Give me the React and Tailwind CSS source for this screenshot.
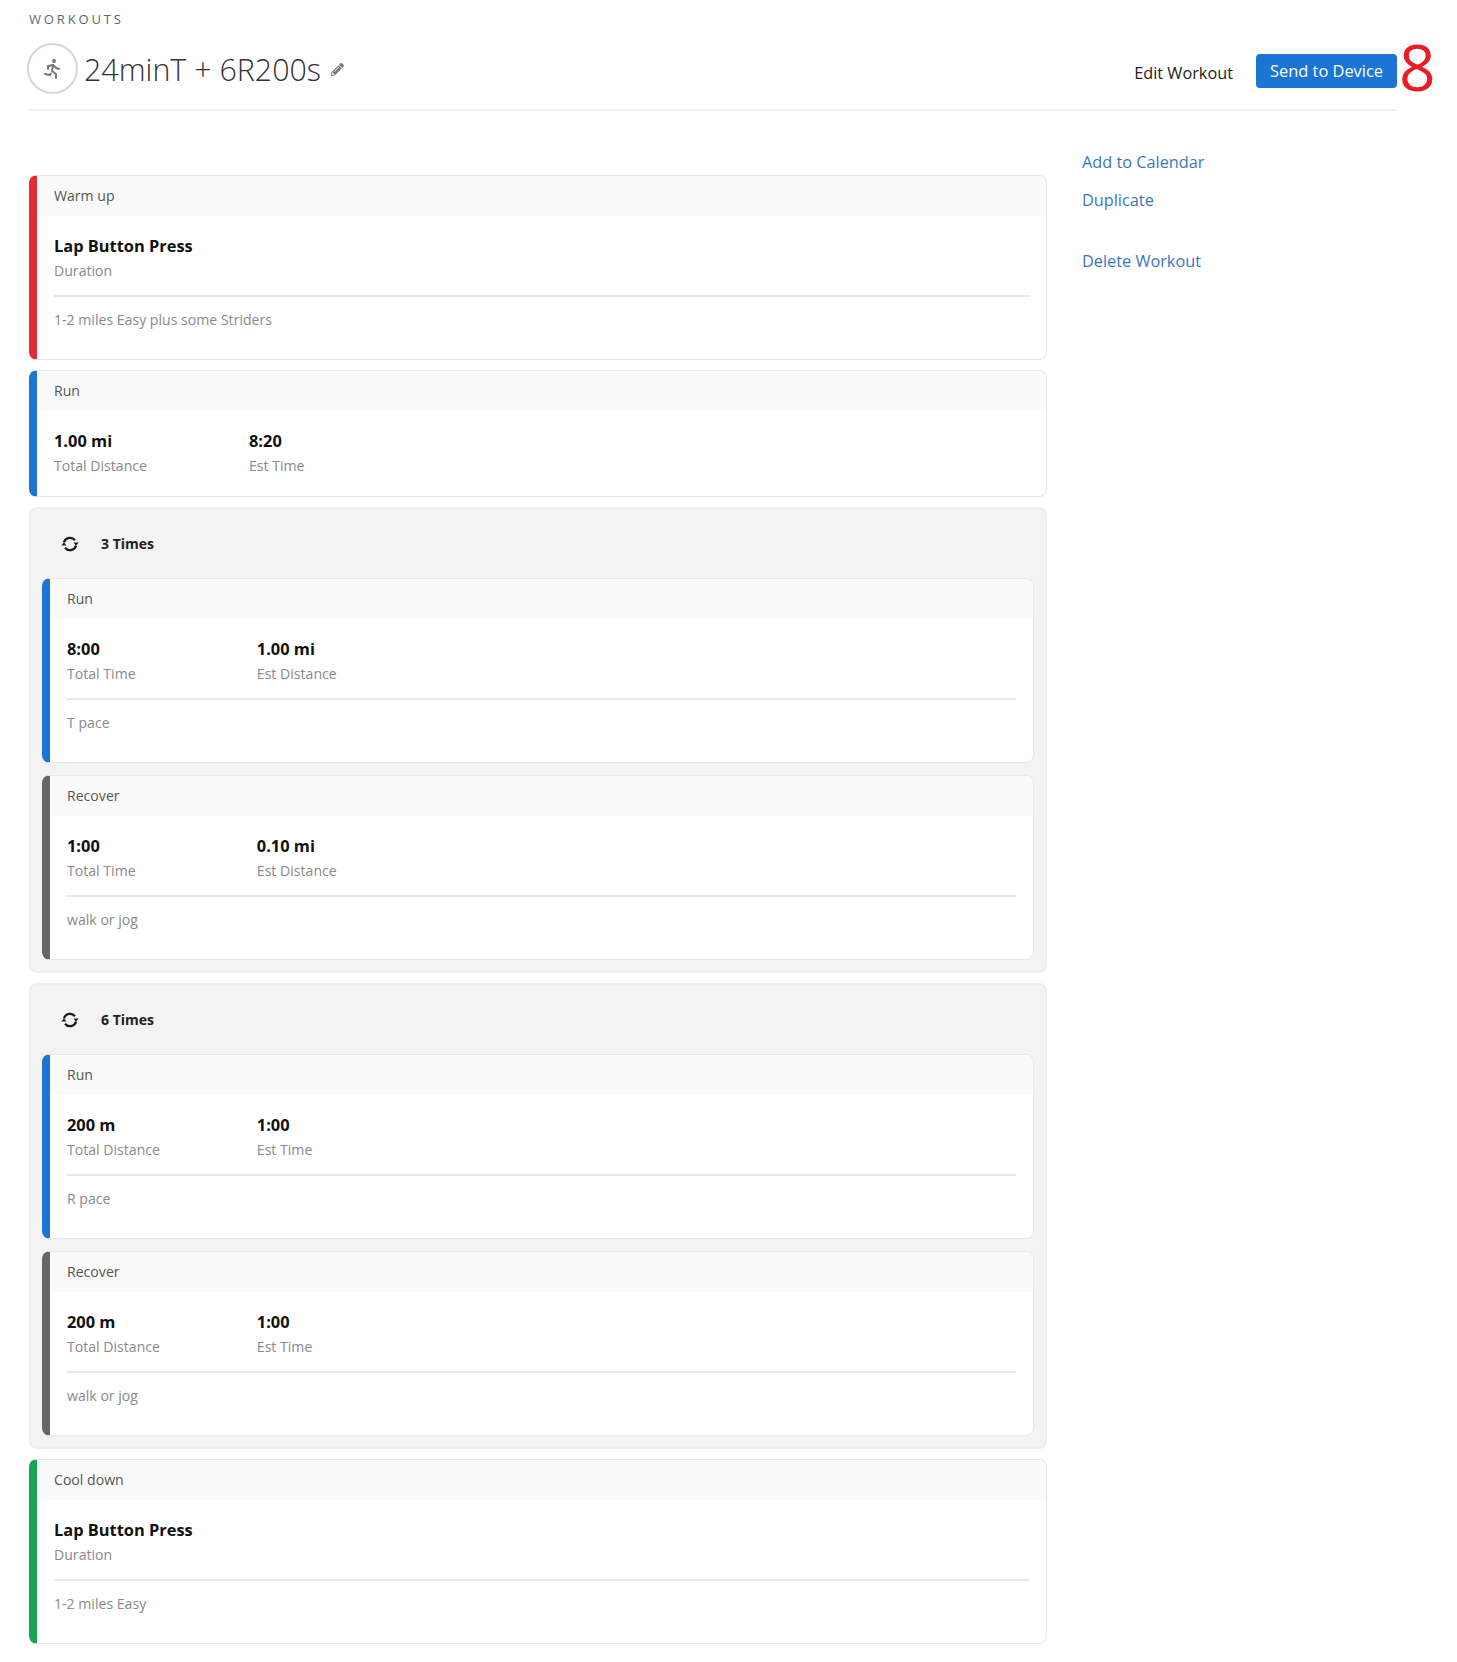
import { FaPencilAlt } from "react-icons/fa";
import { TbRun } from "react-icons/tb";

const stripe = {
  red: "border-l-[#e12d36]",
  blue: "border-l-[#1c74d4]",
  gray: "border-l-[#666666]",
  green: "border-l-[#17a64f]",
};

function RepeatIcon() {
  return (
    <svg width="18" height="18" viewBox="0 0 18 18" className="text-[#1a1a1a]">
      <path d="M3 7.4A6.3 6.3 0 0 1 14 5.2" fill="none" stroke="currentColor" strokeWidth="2.2" />
      <path d="M15 10.6A6.3 6.3 0 0 1 4 12.8" fill="none" stroke="currentColor" strokeWidth="2.2" />
      <path d="M12.6 7.6h5L15 10.8z" fill="currentColor" />
      <path d="M5.4 10.4h-5L3 7.2z" fill="currentColor" />
    </svg>
  );
}

function Stat({ value, label }) {
  return (
    <div className="w-1/5">
      <div className="text-[16.4px] leading-6 font-bold whitespace-nowrap text-[#111111]">{value}</div>
      <div className="mt-px text-[14.1px] leading-6 text-[#8a8a8a]">{label}</div>
    </div>
  );
}

function StepCard({ color, title, stats, note }) {
  return (
    <div className={`overflow-hidden rounded-lg border border-[#e8e8e8] border-l-8 bg-white ${stripe[color]}`}>
      <div className="flex h-10 items-center bg-[#fafafa] pl-[17px] text-[14.1px] text-[#555555]">{title}</div>
      <div className={`pt-[18px] pr-[17px] pl-[17px] ${note ? "pb-[27px]" : "pb-[18px]"}`}>
        <div className="flex">
          {stats.map((stat) => (
            <Stat key={stat.label} value={stat.value} label={stat.label} />
          ))}
        </div>
        {note && (
          <>
            <div className="mt-3 h-0.5 bg-[#e8e8e8]" />
            <div className="mt-[11px] text-[14.1px] leading-6 text-[#8a8a8a]">{note}</div>
          </>
        )}
      </div>
    </div>
  );
}

function RepeatGroup({ times, children }) {
  return (
    <div className="rounded-lg border-2 border-[#ededed] bg-[#f3f3f3] px-[11px] pb-[11px]">
      <div className="flex h-[69px] items-center pl-[19px] text-sm font-bold text-[#222222]">
        <RepeatIcon />
        <span className="ml-[22px]">{times} Times</span>
      </div>
      <div className="flex flex-col gap-3">{children}</div>
    </div>
  );
}

export default function App() {
  return (
    <div className="h-[1662px] bg-white pl-[29px] font-['Open_Sans',sans-serif]">
      <div className="w-[1368px]">
        <div className="pt-2.5 text-[13px] leading-[18px] tracking-[0.22em] text-[#666666]">WORKOUTS</div>
        <div className="flex h-[83px] items-start border-b-2 border-[#f0f0f0]">
          <div className="mt-[15px] -ml-0.5 flex h-[51px] w-[51px] items-center justify-center rounded-full border-2 border-[#d6d6d6] text-[#777777]">
            <TbRun size={24} />
          </div>
          <h1 className="mt-[19px] ml-[6px] text-[30.4px] leading-[46px] font-light text-[#333333]">24minT + 6R200s</h1>
          <FaPencilAlt size={13} className="mt-[35px] ml-[10px] text-[#777777]" />
          <div className="mt-[26px] ml-auto flex items-start">
            <span className="mt-[5px] text-[16.3px] leading-7 text-[#222222]">Edit Workout</span>
            <button type="button" className="ml-[23px] h-[34px] w-[141px] rounded bg-[#1c74d4] text-[16.4px] text-white">
              Send to Device
            </button>
          </div>
        </div>
      </div>

      <div className="flex">
        <div className="mt-[64px] flex w-[1018px] flex-col gap-[10px]">
          <StepCard
            color="red"
            title="Warm up"
            stats={[{ value: "Lap Button Press", label: "Duration" }]}
            note="1-2 miles Easy plus some Striders"
          />
          <StepCard
            color="blue"
            title="Run"
            stats={[
              { value: "1.00 mi", label: "Total Distance" },
              { value: "8:20", label: "Est Time" },
            ]}
          />
          <RepeatGroup times={3}>
            <StepCard
              color="blue"
              title="Run"
              stats={[
                { value: "8:00", label: "Total Time" },
                { value: "1.00 mi", label: "Est Distance" },
              ]}
              note="T pace"
            />
            <StepCard
              color="gray"
              title="Recover"
              stats={[
                { value: "1:00", label: "Total Time" },
                { value: "0.10 mi", label: "Est Distance" },
              ]}
              note="walk or jog"
            />
          </RepeatGroup>
          <RepeatGroup times={6}>
            <StepCard
              color="blue"
              title="Run"
              stats={[
                { value: "200 m", label: "Total Distance" },
                { value: "1:00", label: "Est Time" },
              ]}
              note="R pace"
            />
            <StepCard
              color="gray"
              title="Recover"
              stats={[
                { value: "200 m", label: "Total Distance" },
                { value: "1:00", label: "Est Time" },
              ]}
              note="walk or jog"
            />
          </RepeatGroup>
          <StepCard
            color="green"
            title="Cool down"
            stats={[{ value: "Lap Button Press", label: "Duration" }]}
            note="1-2 miles Easy"
          />
        </div>
        <div className="mt-[39px] ml-[35px] flex flex-col items-start text-[16.3px] leading-6 text-[#3a77c0]">
          <a href="#calendar">Add to Calendar</a>
          <a href="#duplicate" className="mt-[14px]">Duplicate</a>
          <a href="#delete" className="mt-[37px]">Delete Workout</a>
        </div>
      </div>

      <div className="absolute top-[29px] left-[1399px] text-[64px] leading-[76px] font-medium text-[#ea1c24]">8</div>
    </div>
  );
}
